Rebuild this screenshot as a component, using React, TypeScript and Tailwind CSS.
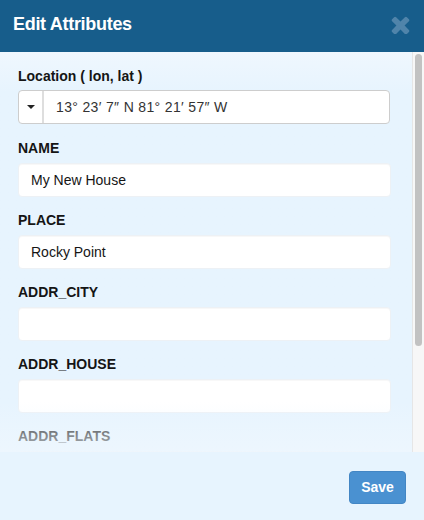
import React from "react";

const font = { fontFamily: '"Liberation Sans", Arial, Helvetica, sans-serif' };

function Field({ label, value }: { label: string; value?: string }) {
  return (
    <div className="mb-[13px]">
      <div className="text-[14px] leading-[20px] font-bold text-[#151515] mb-[5px]">{label}</div>
      <div className="h-[34px] w-[373px] rounded-[4px] bg-white border border-[#edf1f5] shadow-[inset_0_1px_1px_rgba(0,0,0,0.03)] flex items-center pl-[12px] text-[14px] text-[#151515]">
        {value}
      </div>
    </div>
  );
}

export default function App() {
  return (
    <div style={font} className="w-[424px] h-[520px] bg-[#e7f4fe] flex flex-col overflow-hidden">
      <div className="h-[52px] shrink-0 bg-[#175d8b] flex justify-between px-[13px] pt-[13px]">
        <div className="text-white font-bold text-[18px] leading-[22px] tracking-[-0.3px]">Edit Attributes</div>
        <svg
          className="mt-[2px] mr-[1px]"
          width="19"
          height="19"
          viewBox="110 250 1188 1276"
          fill="#5084aa"
        >
          <path d="M1298 1322q0 40-28 68l-136 136q-28 28-68 28t-68-28l-294-294-294 294q-28 28-68 28t-68-28l-136-136q-28-28-28-68t28-68l294-294-294-294q-28-28-28-68t28-68l136-136q28-28 68-28t68 28l294 294 294-294q28-28 68-28t68 28l136 136q28 28 28 68t-28 68l-294 294 294 294q28 28 28 68z" />
        </svg>
      </div>
      <div className="h-[400px] shrink-0 flex relative">
        <div className="flex-1 overflow-hidden pl-[18px] pt-[14px] bg-gradient-to-b from-[#eff7fe] to-[#e7f4fe] to-[40px]">
          <div className="mb-[14px]">
            <div className="text-[14px] leading-[20px] font-bold text-[#151515] mb-[4px]">Location ( lon, lat )</div>
            <div className="h-[34px] w-[372px] rounded-[4px] bg-white border border-[#cdcdcd] flex items-stretch overflow-hidden">
              <div className="w-[25px] border-r-2 border-[#dedede] flex items-center justify-center">
                <div className="w-0 h-0 border-l-[4px] border-r-[4px] border-t-[4px] border-l-transparent border-r-transparent border-t-[#222]" />
              </div>
              <div className="flex items-center pl-[12px] text-[14px] text-[#333] tracking-[0.35px]">13° 23′ 7″ N 81° 21′ 57″ W</div>
            </div>
          </div>
          <Field label="NAME" value="My New House" />
          <Field label="PLACE" value="Rocky Point" />
          <Field label="ADDR_CITY" />
          <Field label="ADDR_HOUSE" />
          <Field label="ADDR_FLATS" />
        </div>
        <div className="w-[12px] shrink-0 bg-[#f7f7f7] border-l border-[#e6e6e6] pt-[2px] pl-[2px]">
          <div className="w-[7px] h-[292px] rounded-full bg-[#c2c2c2]" />
        </div>
        <div className="absolute left-0 right-[12px] bottom-0 h-[50px] bg-gradient-to-b from-[rgba(239,247,254,0)] to-[rgba(239,247,254,0.75)] pointer-events-none" />
      </div>
      <div className="flex-1 flex justify-end items-start pt-[19px] pr-[18px]">
        <button className="w-[57px] h-[33px] rounded-[4px] bg-[#4a91d1] border border-[#4386c4] text-white font-bold text-[14px]">
          Save
        </button>
      </div>
    </div>
  );
}
